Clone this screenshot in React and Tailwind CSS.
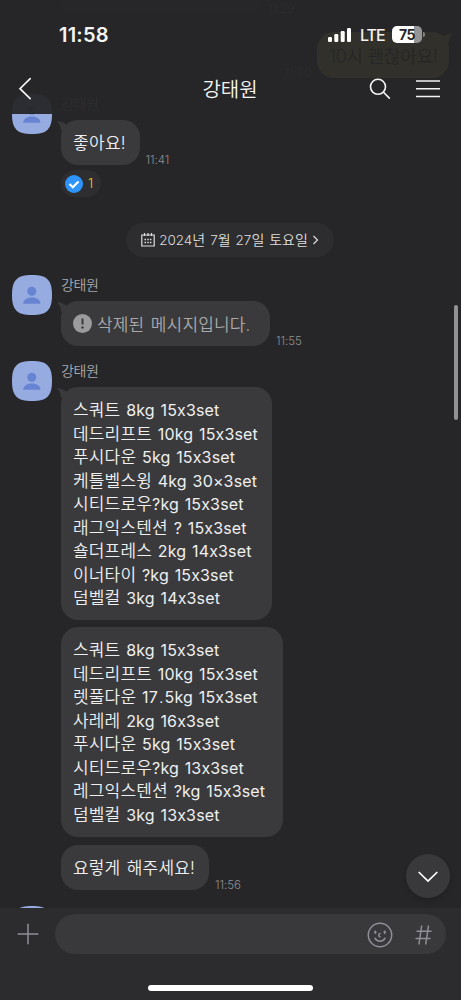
import React from 'react';

const firstWorkout = [
  '스쿼트 8kg 15x3set',
  '데드리프트 10kg 15x3set',
  '푸시다운 5kg 15x3set',
  '케틀벨스윙 4kg 30×3set',
  '시티드로우?kg 15x3set',
  '래그익스텐션 ? 15x3set',
  '숄더프레스 2kg 14x3set',
  '이너타이 ?kg 15x3set',
  '덤벨컬 3kg 14x3set',
];

const secondWorkout = [
  '스쿼트 8kg 15x3set',
  '데드리프트 10kg 15x3set',
  '렛풀다운 17.5kg 15x3set',
  '사레레 2kg 16x3set',
  '푸시다운 5kg 15x3set',
  '시티드로우?kg 13x3set',
  '레그익스텐션 ?kg 15x3set',
  '덤벨컬 3kg 13x3set',
];

const Avatar = () => (
  <svg width="40" height="40" viewBox="0 0 40 40" className="shrink-0">
    <path d="M20 0C35 0 40 5 40 20S35 40 20 40 0 35 0 20 5 0 20 0Z" fill="#96abe0" />
    <circle cx="19.8" cy="16.3" r="4.5" fill="#6784d3" />
    <path d="M11.2 28.8c0-3.8 3.6-6.2 8.6-6.2s8.6 2.4 8.6 6.2Z" fill="#6784d3" />
  </svg>
);

const Tail = ({ className }) => (
  <svg width="12" height="10" viewBox="0 0 12 10" className={className}>
    <path d="M0 .6C3 .3 5.5 .8 7.5 2.5L12 5 4 10C4 6 2.5 3 0 .6Z" fill="currentColor" />
  </svg>
);

const Bubble = ({ tail, className = '', children }) => (
  <div className={`relative shrink-0 whitespace-nowrap rounded-[17px] bg-[#3a3a3c] px-3 text-[#f0f0f1] ${className}`}>
    {tail && <Tail className="absolute -left-[4px] top-[1px] text-[#3a3a3c]" />}
    {children}
  </div>
);

const Message = ({ className = '', children }) => (
  <div className={`flex items-start gap-[9px] pl-3 ${className}`}>
    <Avatar />
    <div>
      <div className="h-[26px] pt-[1px] text-[14px] leading-[18px] tracking-[-0.4px] text-[#a9a9ab]">강태원</div>
      {children}
    </div>
  </div>
);

const Time = ({ children }) => (
  <span className="text-[11.5px] leading-[10px] text-[#919193]">{children}</span>
);

// Latin runs are set a little smaller than the Hangul around them
const latinClass = (part) => {
  if (part === '.') return 'text-[16px] px-[1px]';
  return 'text-[16px] font-[380] tracking-[0.15px]';
};

const Workout = ({ lines }) => (
  <div className="text-[17px] leading-[23.55px] tracking-[0.17px] [word-spacing:0.8px]">
    {lines.map((line, i) => (
      <div key={i} className="h-[23.55px]">
        {line.split(/([\w×?]+|\.)/).map((part, j) => (
          <span key={j} className={j % 2 ? latinClass(part) : ''}>{part}</span>
        ))}
      </div>
    ))}
  </div>
);

const Header = () => (
  <header className="absolute inset-x-0 top-0 z-10 h-[114px] bg-[#262628]/95 text-[#f4f4f4]">
    <div className="flex h-[64px] items-start justify-between pl-[59px] pr-[36px] pt-[25px]">
      <span className="text-[20px] font-semibold leading-[20px] tracking-[0.2px]">11:58</span>
      <div className="flex items-center pt-[1px]">
        <svg width="24" height="16" viewBox="0 0 24 16" fill="#fff">
          <rect x="0" y="10" width="4" height="5" rx="1.2" />
          <rect x="6.3" y="7" width="4" height="8" rx="1.2" />
          <rect x="12.7" y="4" width="4" height="11" rx="1.2" />
          <rect x="19" y="1" width="4" height="14" rx="1.2" />
        </svg>
        <span className="ml-[8px] w-[24px] text-[16px] font-medium leading-[16px] tracking-[-1px]">LTE</span>
        <div className="ml-[8px] flex h-[17px] w-[30px] items-center justify-center rounded-[5px] bg-linear-to-r from-white from-73% to-[#959595] to-73% text-[14px] font-bold tracking-[-0.4px] text-[#262628]">75</div>
        <div className="ml-[1px] h-[5px] w-[2px] rounded-r bg-[#858585]" />
      </div>
    </div>
    <div className="grid h-[50px] grid-cols-[1fr_auto_1fr] items-center pl-[18px] pr-[21px]">
      <svg width="14" height="24" viewBox="0 0 14 24" fill="none" stroke="currentColor" strokeWidth="1.7" strokeLinecap="round">
        <path d="M12.2 1.7 2 11.7l10.2 10" />
      </svg>
      <h1 className="pl-[2px] pt-[1px] text-[20px] leading-[24px]">강태원</h1>
      <div className="flex items-center justify-end gap-[25px]">
        <svg width="22" height="22" viewBox="0 0 22 22" fill="none" stroke="currentColor" strokeWidth="1.6" strokeLinecap="round">
          <circle cx="9" cy="8.8" r="7.5" />
          <path d="m14.5 14.3 5.8 5.8" />
        </svg>
        <svg width="24" height="20" viewBox="0 0 24 20" stroke="currentColor" strokeWidth="1.6">
          <path d="M0 2h24M0 9.8h24M0 17.5h24" />
        </svg>
      </div>
    </div>
  </header>
);

const Footer = () => (
  <footer className="absolute inset-x-0 bottom-0 z-10 h-[92px] bg-[#2c2c2e] text-[#8f8f99]">
    <div className="flex items-center gap-[16px] pl-[17px] pr-[15px] pt-[6px]">
      <svg width="22" height="22" viewBox="0 0 22 22" stroke="currentColor" strokeWidth="1.5" className="shrink-0">
        <path d="M.7 11h20.6M11 .7v20.6" />
      </svg>
      <div className="flex h-[40px] flex-1 items-center justify-end gap-[22px] rounded-full bg-[#39393b] pr-[14px]">
        <svg width="26" height="26" viewBox="0 0 26 26" fill="none" stroke="currentColor" strokeWidth="1.5" strokeLinecap="round" className="mt-[1px]">
          <circle cx="13" cy="13" r="11.7" />
          <path d="M8.3 9.6v1.2M17.7 9.6v1.2" strokeWidth="2.2" />
          <path d="M13 11.6c-1.7.3-1.7 3 0 3.2M8 16.2c2 4 8 4 10 0" />
        </svg>
        <svg width="17" height="20" viewBox="0 0 17 20" fill="none" stroke="currentColor" strokeWidth="1.5" className="mt-[1px]">
          <path d="M6.7.5 3.9 19.5M13.5.5l-2.8 19M1.5 6.3H16.5M.5 13.6H15.5" />
        </svg>
      </div>
    </div>
    <div className="mx-auto mt-[31px] h-[6px] w-[165px] rounded-full bg-white" />
  </footer>
);

const App = () => {
  return (
    <div className="relative h-[1000px] w-[461px] overflow-hidden bg-[#262628] font-['Inter','Noto_Sans_CJK_KR',sans-serif] font-[350] [font-feature-settings:'calt'_0]">
      <Header />

      <main className="flex h-full flex-col overflow-hidden">
        <div className="flex h-[14px] shrink-0 items-end gap-[6px] pl-[61px]">
          <div className="h-full w-[201px] rounded-b-[17px] bg-[#3a3a3c]" />
          <Time>11:29</Time>
        </div>

        <div className="mt-[18px] flex shrink-0 items-end justify-end gap-[6px] pr-[12px]">
          <Time>11:30</Time>
          <div className="relative h-[46px] w-[132px] whitespace-nowrap rounded-[17px] bg-[#f5df4d] px-3 text-[18px] leading-[49px] tracking-[-0.3px] text-[#1c1c1e]">
            10시 괜찮아요!
            <Tail className="absolute -right-[4px] top-[1px] -scale-x-100 text-[#f5df4d]" />
          </div>
        </div>

        <Message className="mt-[16px] shrink-0">
          <div className="flex items-end gap-[6px]">
            <Bubble tail className="h-[45px] w-[78.5px] text-[17px] leading-[47px] tracking-[0.3px]">좋아요!</Bubble>
            <Time>11:41</Time>
          </div>
          <div className="mt-[5px] flex h-[27px] w-[40px] items-center gap-[5px] rounded-full bg-[#2e2e30] pl-[4px] text-[13px] text-[#e8d21d]">
            <svg width="18" height="18" viewBox="0 0 18 18" fill="none">
              <circle cx="9" cy="9" r="9" fill="#2e93fa" />
              <path d="m4.5 9 3.3 3.2L13.5 6.5" stroke="#fff" strokeWidth="2.2" />
            </svg>
            1
          </div>
        </Message>

        <div className="mr-[127px] mt-[26px] flex h-[34px] w-[208px] shrink-0 items-center justify-center gap-[4px] self-end rounded-full bg-[#2d2d2f] text-[#dedede]">
          <svg width="14" height="14" viewBox="0 0 14 14" fill="none" stroke="currentColor" strokeWidth="1.2" className="shrink-0">
            <path d="M.8 2h12.4v11H.8ZM3.5 0v3M7 0v3M10.5 0v3" />
            <path d="M3.5 6.5h7M3.5 9.5h7" strokeWidth="1.5" strokeDasharray="1.5 1.2" />
          </svg>
          <span className="whitespace-nowrap text-[14px] leading-[18px] [word-spacing:1px]">
            <span className="text-[13.5px]">2024</span>년 <span className="text-[13.5px]">7</span>월 <span className="text-[13.5px]">27</span>일 토요일
          </span>
          <svg width="7" height="10" viewBox="0 0 7 10" fill="none" stroke="currentColor" strokeWidth="1.2" className="shrink-0">
            <path d="m1.5 1 4 4-4 4" />
          </svg>
        </div>

        <Message className="mt-[18px] shrink-0">
          <div className="flex items-end gap-[6px]">
            <Bubble tail className="flex h-[45px] w-[209px] items-center gap-[5px] text-[17px] tracking-[0.15px] [word-spacing:1.5px]">
              <svg width="19" height="19" viewBox="0 0 19 19" className="shrink-0">
                <circle cx="9.5" cy="9.5" r="9.5" fill="#9b9b9d" />
                <path d="M9.5 4.5v6" stroke="#3a3a3c" strokeWidth="2" />
                <circle cx="9.5" cy="13.5" r="1.2" fill="#3a3a3c" />
              </svg>
              <span className="pt-[4px] text-[#a9a9ab]">삭제된 메시지입니다.</span>
            </Bubble>
            <Time>11:55</Time>
          </div>
        </Message>

        <Message className="mt-[15px] shrink-0">
          <Bubble tail className="h-[233px] w-[211px] pt-[12px]">
            <Workout lines={firstWorkout} />
          </Bubble>
          <Bubble className="mt-[7px] h-[210px] w-[222px] pt-[12px]">
            <Workout lines={secondWorkout} />
          </Bubble>
          <div className="mt-[8px] flex items-end gap-[6px]">
            <Bubble className="h-[45px] w-[148px] text-[17px] leading-[47px] tracking-[0.15px] [word-spacing:1.5px]">요렇게 해주세요!</Bubble>
            <Time>11:56</Time>
          </div>
        </Message>

        <Message className="mt-[16px] shrink-0" />
      </main>

      <div className="absolute right-[3px] top-[305px] h-[115px] w-[4px] rounded-full bg-[#929294]" />

      <button className="absolute right-[11px] top-[854px] flex h-[44px] w-[44px] items-center justify-center rounded-full bg-[#39393b] shadow-md">
        <svg width="20" height="12" viewBox="0 0 20 12" fill="none" stroke="#fff" strokeWidth="1.7" strokeLinecap="round" className="mt-[2px]">
          <path d="m1.2 1.5 8.8 8.5 8.8-8.5" />
        </svg>
      </button>

      <Footer />
    </div>
  );
};

export default App;
